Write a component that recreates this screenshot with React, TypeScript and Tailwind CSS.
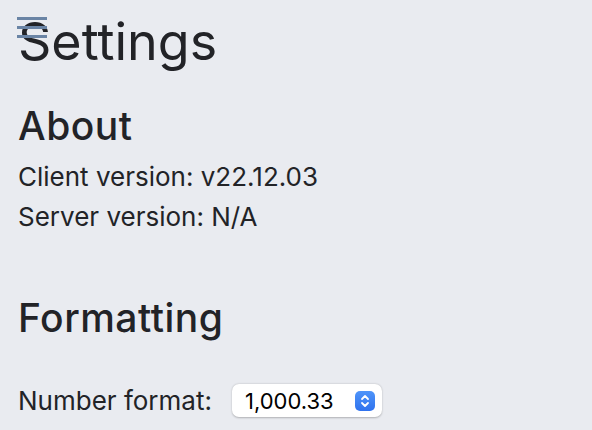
import React from "react";

export default function App() {
  return (
    <div className="relative min-h-screen w-full bg-[#e9ebf0] px-[18px] text-[#222327]" style={{ fontFamily: 'Inter, "Noto Sans", sans-serif' }}>
      <button className="absolute left-[17px] top-[17px] flex h-[21px] w-[30px] flex-col justify-between">
        <span className="block h-[3px] w-full bg-[#6a84a5]" />
        <span className="block h-[3px] w-full bg-[#6a84a5]" />
        <span className="block h-[3px] w-full bg-[#6a84a5]" />
      </button>
      <h1 className="pt-[12px] text-[52px] font-normal leading-[60px]">Settings</h1>
      <h2 className="mt-[30px] text-[39px] font-medium leading-[48px] tracking-[0.5px]">About</h2>
      <p className="mt-[7px] text-[26px] leading-[40px]">Client version: v22.12.03</p>
      <p className="text-[26px] leading-[40px]">Server version: N/A</p>
      <h2 className="mt-[57px] text-[39px] font-medium leading-[48px] tracking-[0.5px]">Formatting</h2>
      <div className="mt-[42px] flex items-center gap-[20px] pb-4">
        <span className="text-[26px] leading-[32px]">Number format:</span>
        <div className="flex h-[33px] w-[150px] items-center justify-between rounded-[7px] bg-white pl-[13px] pr-[7px] shadow-[0_0.5px_2px_rgba(0,0,0,0.25)]">
          <span className="text-[22px] leading-none text-black">1,000.33</span>
          <span className="flex h-[20px] w-[20px] items-center justify-center rounded-[5px] bg-gradient-to-b from-[#4f94f9] to-[#2f72ee]">
            <svg width="10" height="14" viewBox="0 0 10 14" fill="none" stroke="white" strokeWidth="1.8" strokeLinecap="round" strokeLinejoin="round">
              <path d="M2 5 L5 2 L8 5" />
              <path d="M2 9 L5 12 L8 9" />
            </svg>
          </span>
        </div>
      </div>
    </div>
  );
}
